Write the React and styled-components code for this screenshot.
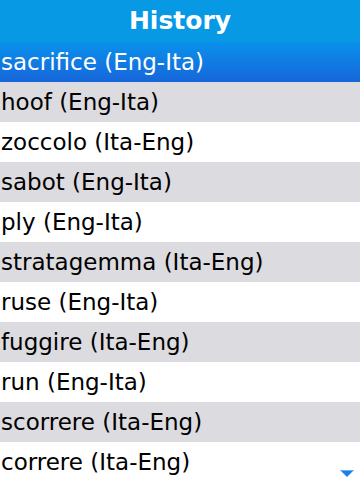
import React from "react";
import styled, { createGlobalStyle } from "styled-components";

const Global = createGlobalStyle`
  html, body { margin: 0; padding: 0; background: #fff; }
  body { font-family: "DejaVu Sans", sans-serif; }
`;

const Screen = styled.div`
  width: 360px;
  height: 480px;
  overflow: hidden;
  position: relative;
  background: #fff;
  display: flex;
  flex-direction: column;
  font-family: "DejaVu Sans", sans-serif;
`;

const TitleBar = styled.div`
  height: 42px;
  flex: none;
  background: #0899e5;
  color: #fff;
  font-weight: bold;
  font-size: 25px;
  display: flex;
  align-items: center;
  justify-content: center;
  padding-bottom: 1px;
  box-sizing: border-box;
`;

const List = styled.div`
  display: flex;
  flex-direction: column;
`;

const Row = styled.div`
  height: 40px;
  flex: none;
  padding-left: 1px;
  display: flex;
  align-items: center;
  font-size: 23px;
  white-space: nowrap;
  color: ${(p) => (p.$selected ? "#fff" : "#000")};
  background: ${(p) =>
    p.$selected
      ? "linear-gradient(#0a91ec, #1766da)"
      : p.$shade
      ? "#dcdbdf"
      : "#fff"};
`;

const ScrollArrow = styled.svg`
  position: absolute;
  right: 6px;
  bottom: 2px;
`;

const items = [
  "sacrifice (Eng-Ita)",
  "hoof (Eng-Ita)",
  "zoccolo (Ita-Eng)",
  "sabot (Eng-Ita)",
  "ply (Eng-Ita)",
  "stratagemma (Ita-Eng)",
  "ruse (Eng-Ita)",
  "fuggire (Ita-Eng)",
  "run (Eng-Ita)",
  "scorrere (Ita-Eng)",
  "correre (Ita-Eng)",
];

export default function App() {
  return (
    <Screen>
      <Global />
      <TitleBar>History</TitleBar>
      <List>
        {items.map((t, i) => (
          <Row key={t} $selected={i === 0} $shade={i % 2 === 1}>
            {t}
          </Row>
        ))}
      </List>
      <ScrollArrow width="14" height="8" viewBox="0 0 14 8">
        <path d="M0 0 H14 L7 7 Z" fill="#1f7ee8" />
        <path d="M0 0 H14 L13 1 H1 Z" fill="#5fb0f5" />
      </ScrollArrow>
    </Screen>
  );
}
